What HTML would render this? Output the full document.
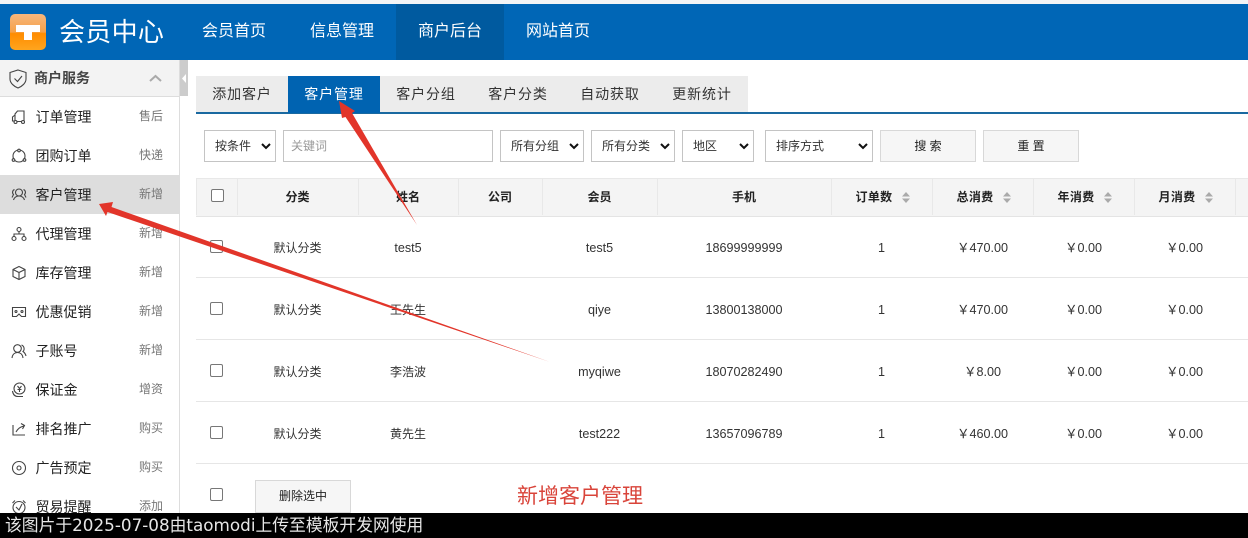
<!DOCTYPE html>
<html lang="zh-CN"><head><meta charset="utf-8"><title>会员中心</title>
<style>
html,body{margin:0;padding:0;background:#fff}
body{width:1248px;height:538px;overflow:hidden;position:relative;font-family:"Liberation Sans","Noto Sans CJK SC",sans-serif;color:#222}
.a{position:absolute;white-space:nowrap}
.nav{position:absolute;top:4px;height:56px;line-height:56px;width:108px;text-align:center;color:#fff;font-size:16px}
.m{position:absolute;left:35.500px;font-size:14px;line-height:20px;color:#222}
.t{position:absolute;left:139px;font-size:12px;line-height:16px;color:#777}
.ic{position:absolute;left:11px;width:16px;height:16px;fill:none;stroke:#444;stroke-width:1.1}
.tab{position:absolute;top:76px;height:36px;line-height:36px;text-align:center;font-size:14px;letter-spacing:.9px;color:#333;width:92px}
.box{position:absolute;top:130px;height:30px;border:1px solid #c4c4c4;background:#fff;font-size:12px;line-height:30px;color:#333}
.box svg{position:absolute;top:11px;width:10px;height:8px}
.btn{position:absolute;background:#f6f6f6;border:1px solid #d8d8d8;text-align:center;font-size:12px;color:#222;box-sizing:border-box}
.th{position:absolute;top:179px;height:36px;line-height:36px;font-size:12px;font-weight:bold;color:#222;text-align:center;white-space:nowrap}
.dv{position:absolute;top:179px;height:36px;width:1px;background:#e8e8e8}
.sort{position:absolute;top:192px;width:8px;height:11px;fill:#aaa}
.cell{position:absolute;font-size:12px;line-height:16px;text-align:center;color:#333;white-space:nowrap}
.n{font-size:12.600px}
.cb{position:absolute;left:210px;width:11px;height:11px;border:1px solid #777;border-radius:2px;background:#fff}
.ln{position:absolute;left:196px;width:1052px;height:1px;background:#e6e6e6}
</style></head><body>

<div class="a" style="left:0;top:0;width:1248px;height:4px;background:#f2f4f6"></div>
<div class="a" style="left:0;top:4px;width:1248px;height:56px;background:#0066b6"></div>
<div class="a" style="left:396px;top:4px;width:108px;height:56px;background:#005a9f"></div>
<div class="a" style="left:10px;top:14px;width:36px;height:36px;border-radius:5px;background:linear-gradient(#f7b67c 0%,#f5a24a 50%,#ff8c00 54%,#ffa51e 100%)"></div>
<div class="a" style="left:16px;top:25px;width:24px;height:7px;background:#fff"></div>
<div class="a" style="left:24px;top:25px;width:8px;height:15px;background:#fff"></div>
<div class="a" style="left:59px;top:13px;font-size:26px;letter-spacing:.3px;line-height:38px;color:#fff">会员中心</div>
<div class="nav" style="left:180px">会员首页</div>
<div class="nav" style="left:288px">信息管理</div>
<div class="nav" style="left:396px">商户后台</div>
<div class="nav" style="left:504px">网站首页</div>

<!-- sidebar -->
<div class="a" style="left:179px;top:60px;width:1px;height:453px;background:#ddd"></div>
<div class="a" style="left:0;top:60px;width:179px;height:36px;background:#f3f3f3;border-bottom:1px solid #ddd"></div>
<div class="a" style="left:180px;top:60px;width:8px;height:36px;background:#ccc"></div>
<svg class="a" style="left:182px;top:74px" width="5" height="9"><path d="M4 0V9L0 4.500Z" fill="#fff"/></svg>
<svg class="a" style="left:9px;top:69px" width="18" height="20" fill="none" stroke="#444" stroke-width="1.1"><path d="M9 1 L17 3.500 V10 C17 14 13 17.500 9 19 C5 17.500 1 14 1 10 V3.500 Z"/><path d="M5.500 9.500 L8.500 12.500 L13 7"/></svg>
<div class="a" style="left:34px;top:68px;font-size:14px;line-height:20px;font-weight:bold;color:#444">商户服务</div>
<svg class="a" style="left:149px;top:74px" width="13" height="8" fill="none" stroke="#aaa" stroke-width="2"><path d="M1 7 L6.500 2 L12 7"/></svg>

<div class="a" style="left:0;top:175px;width:179px;height:39px;background:#ddd"></div>

<svg class="ic" style="top:109px" viewBox="0 0 16 16"><path d="M4 12V5L6.500 2H13V12M4 12H1.500V8L4 6M6 12.500H11"/><circle cx="4.500" cy="13" r="1.500"/><circle cx="12" cy="13" r="1.500"/></svg>
<div class="m" style="top:107px">订单管理</div><div class="t" style="top:108px">售后</div>

<svg class="ic" style="top:148px" viewBox="0 0 16 16"><circle cx="8" cy="8" r="6"/><circle cx="8" cy="2.500" r="1.300" fill="#fff"/><circle cx="2.500" cy="12" r="1.300" fill="#fff"/><circle cx="13.500" cy="12" r="1.300" fill="#fff"/></svg>
<div class="m" style="top:146px">团购订单</div><div class="t" style="top:147px">快递</div>

<svg class="ic" style="top:187px" viewBox="0 0 16 16"><circle cx="8" cy="5.500" r="3.500"/><path d="M2.500 13C3 10.500 5.500 9 8 9S13 10.500 13.500 13M3.500 2.500A3 3 0 0 0 2.500 7.500L1 10.500M12.500 2.500A3 3 0 0 1 13.500 7.500L15 10.500"/></svg>
<div class="m" style="top:185px">客户管理</div><div class="t" style="top:186px">新增</div>

<svg class="ic" style="top:226px" viewBox="0 0 16 16"><circle cx="8" cy="3.500" r="2"/><circle cx="3" cy="12.500" r="2"/><circle cx="13" cy="12.500" r="2"/><path d="M8 5.500V8M3 10.500V8H13V10.500"/></svg>
<div class="m" style="top:224px">代理管理</div><div class="t" style="top:225px">新增</div>

<svg class="ic" style="top:265px" viewBox="0 0 16 16"><path d="M8 1.500L14 4.500V11.500L8 14.500L2 11.500V4.500ZM2 4.500L8 7.500L14 4.500M8 7.500V14.500"/></svg>
<div class="m" style="top:263px">库存管理</div><div class="t" style="top:264px">新增</div>

<svg class="ic" style="top:304px" viewBox="0 0 16 16"><path d="M1.500 3.500H14.500V12.500H10.500L8 10L5.500 12.500H1.500Z"/><circle cx="5" cy="7.500" r="1"/><circle cx="11" cy="7.500" r="1"/></svg>
<div class="m" style="top:302px">优惠促销</div><div class="t" style="top:303px">新增</div>

<svg class="ic" style="top:343px" viewBox="0 0 16 16"><circle cx="6.500" cy="5.500" r="3.800"/><path d="M1 15C1.500 11 4 9.500 6.500 9.500S11.500 11 12 15M10.500 2A4 4 0 0 1 12 8.500C13.500 9.500 14.500 11 15 13"/></svg>
<div class="m" style="top:341px">子账号</div><div class="t" style="top:342px">新增</div>

<svg class="ic" style="top:382px" viewBox="0 0 16 16"><circle cx="8.500" cy="6.500" r="5.500"/><path d="M6.500 4L8.500 6.500L10.500 4M8.500 6.500V10M6.500 7.500H10.500M1.500 9C2 12.500 4 14.500 7 14.500H12"/></svg>
<div class="m" style="top:380px">保证金</div><div class="t" style="top:381px">增资</div>

<svg class="ic" style="top:421px" viewBox="0 0 16 16"><path d="M2 4V14H14M5 11C7 7.500 9 6 13 5M10 2.500L13.500 4.500L11.500 8"/></svg>
<div class="m" style="top:419px">排名推广</div><div class="t" style="top:420px">购买</div>

<svg class="ic" style="top:460px" viewBox="0 0 16 16"><circle cx="8" cy="8" r="6.500"/><circle cx="8" cy="8" r="2"/></svg>
<div class="m" style="top:458px">广告预定</div><div class="t" style="top:459px">购买</div>

<svg class="ic" style="top:499px" viewBox="0 0 16 16"><circle cx="8" cy="8.500" r="6"/><path d="M5 8L8 11L11 5M1.500 4L4 1.500M14.500 4L12 1.500"/></svg>
<div class="m" style="top:497px">贸易提醒</div><div class="t" style="top:498px">添加</div>

<!-- tabs -->
<div class="a" style="left:196px;top:76px;width:552px;height:36px;background:#ececec"></div>
<div class="a" style="left:196px;top:112px;width:1052px;height:2px;background:#1a69a0"></div>
<div class="a" style="left:288px;top:76px;width:92px;height:37px;background:#0063b1"></div>
<div class="tab" style="left:196px">添加客户</div>
<div class="tab" style="left:288px;color:#fff">客户管理</div>
<div class="tab" style="left:380px">客户分组</div>
<div class="tab" style="left:472px">客户分类</div>
<div class="tab" style="left:564px">自动获取</div>
<div class="tab" style="left:656px">更新统计</div>

<!-- filters -->
<div class="box" style="left:204px;width:70px"><span class="a" style="left:10px">按条件</span><svg style="left:56px" viewBox="0 0 10 8"><path d="M1 2L5 6L9 2" fill="none" stroke="#111" stroke-width="2"/></svg></div>
<div class="box" style="left:283px;width:208px;color:#999"><span class="a" style="left:7px">关键词</span></div>
<div class="box" style="left:500px;width:82px"><span class="a" style="left:10px">所有分组</span><svg style="left:68px" viewBox="0 0 10 8"><path d="M1 2L5 6L9 2" fill="none" stroke="#111" stroke-width="2"/></svg></div>
<div class="box" style="left:591px;width:82px"><span class="a" style="left:10px">所有分类</span><svg style="left:68px" viewBox="0 0 10 8"><path d="M1 2L5 6L9 2" fill="none" stroke="#111" stroke-width="2"/></svg></div>
<div class="box" style="left:682px;width:70px"><span class="a" style="left:10px">地区</span><svg style="left:56px" viewBox="0 0 10 8"><path d="M1 2L5 6L9 2" fill="none" stroke="#111" stroke-width="2"/></svg></div>
<div class="box" style="left:765px;width:106px"><span class="a" style="left:10px">排序方式</span><svg style="left:92px" viewBox="0 0 10 8"><path d="M1 2L5 6L9 2" fill="none" stroke="#111" stroke-width="2"/></svg></div>
<div class="btn" style="left:880px;top:130px;width:96px;height:32px;line-height:30px">搜 索</div>
<div class="btn" style="left:983px;top:130px;width:96px;height:32px;line-height:30px">重 置</div>

<!-- table header -->
<div class="a" style="left:196px;top:178px;width:1052px;height:37px;background:#f4f4f4;border-top:1px solid #e8e8e8;border-bottom:1px solid #e4e4e4"></div>
<div class="dv" style="left:237px"></div><div class="dv" style="left:358px"></div><div class="dv" style="left:458px"></div><div class="dv" style="left:542px"></div><div class="dv" style="left:657px"></div><div class="dv" style="left:831px"></div><div class="dv" style="left:932px"></div><div class="dv" style="left:1033px"></div><div class="dv" style="left:1134px"></div><div class="dv" style="left:1235px"></div>
<div class="a" style="left:196px;top:178px;width:1px;height:37px;background:#e8e8e8"></div>
<div class="cb" style="top:189px;left:211px"></div>
<div class="th" style="left:237px;width:121px">分类</div>
<div class="th" style="left:358px;width:100px">姓名</div>
<div class="th" style="left:458px;width:84px">公司</div>
<div class="th" style="left:542px;width:115px">会员</div>
<div class="th" style="left:657px;width:174px">手机</div>
<div class="th" style="left:855px;width:38px;letter-spacing:.3px">订单数</div><svg class="sort" style="left:902px" viewBox="0 0 8 11"><path d="M4 0L8 4.500H0ZM4 11L8 6.500H0Z"/></svg>
<div class="th" style="left:956px;width:38px;letter-spacing:.3px">总消费</div><svg class="sort" style="left:1003px" viewBox="0 0 8 11"><path d="M4 0L8 4.500H0ZM4 11L8 6.500H0Z"/></svg>
<div class="th" style="left:1057px;width:38px;letter-spacing:.3px">年消费</div><svg class="sort" style="left:1104px" viewBox="0 0 8 11"><path d="M4 0L8 4.500H0ZM4 11L8 6.500H0Z"/></svg>
<div class="th" style="left:1158px;width:38px;letter-spacing:.3px">月消费</div><svg class="sort" style="left:1205px" viewBox="0 0 8 11"><path d="M4 0L8 4.500H0ZM4 11L8 6.500H0Z"/></svg>

<!-- rows -->
<div class="cb" style="top:240px"></div>
<div class="cell" style="left:237px;width:121px;top:240px">默认分类</div><div class="cell n" style="left:358px;width:100px;top:240px">test5</div><div class="cell n" style="left:542px;width:115px;top:240px">test5</div><div class="cell n" style="left:657px;width:174px;top:240px">18699999999</div><div class="cell n" style="left:831px;width:101px;top:240px">1</div><div class="cell n" style="left:932px;width:101px;top:240px">￥470.00</div><div class="cell n" style="left:1033px;width:101px;top:240px">￥0.00</div><div class="cell n" style="left:1134px;width:101px;top:240px">￥0.00</div>
<div class="ln" style="top:277px"></div>

<div class="cb" style="top:302px"></div>
<div class="cell" style="left:237px;width:121px;top:302px">默认分类</div><div class="cell" style="left:358px;width:100px;top:302px">王先生</div><div class="cell n" style="left:542px;width:115px;top:302px">qiye</div><div class="cell n" style="left:657px;width:174px;top:302px">13800138000</div><div class="cell n" style="left:831px;width:101px;top:302px">1</div><div class="cell n" style="left:932px;width:101px;top:302px">￥470.00</div><div class="cell n" style="left:1033px;width:101px;top:302px">￥0.00</div><div class="cell n" style="left:1134px;width:101px;top:302px">￥0.00</div>
<div class="ln" style="top:339px"></div>

<div class="cb" style="top:364px"></div>
<div class="cell" style="left:237px;width:121px;top:364px">默认分类</div><div class="cell" style="left:358px;width:100px;top:364px">李浩波</div><div class="cell n" style="left:542px;width:115px;top:364px">myqiwe</div><div class="cell n" style="left:657px;width:174px;top:364px">18070282490</div><div class="cell n" style="left:831px;width:101px;top:364px">1</div><div class="cell n" style="left:932px;width:101px;top:364px">￥8.00</div><div class="cell n" style="left:1033px;width:101px;top:364px">￥0.00</div><div class="cell n" style="left:1134px;width:101px;top:364px">￥0.00</div>
<div class="ln" style="top:401px"></div>

<div class="cb" style="top:426px"></div>
<div class="cell" style="left:237px;width:121px;top:426px">默认分类</div><div class="cell" style="left:358px;width:100px;top:426px">黄先生</div><div class="cell n" style="left:542px;width:115px;top:426px">test222</div><div class="cell n" style="left:657px;width:174px;top:426px">13657096789</div><div class="cell n" style="left:831px;width:101px;top:426px">1</div><div class="cell n" style="left:932px;width:101px;top:426px">￥460.00</div><div class="cell n" style="left:1033px;width:101px;top:426px">￥0.00</div><div class="cell n" style="left:1134px;width:101px;top:426px">￥0.00</div>
<div class="ln" style="top:463px"></div>

<div class="cb" style="top:488px"></div>
<div class="btn" style="left:255px;top:480px;width:96px;height:33px;line-height:31px">删除选中</div>
<div class="a" style="left:517px;top:482px;font-size:21px;line-height:30px;color:#d9443a">新增客户管理</div>

<!-- arrows -->
<svg class="a" style="left:0;top:0" width="1248" height="538">
<polygon points="339,101 355,111 352,113 417,225 345.500,117 342,118" fill="#e2352a"/>
<polygon points="99,204 113,202 111.500,207 550,362 107.500,212 106,216" fill="#e2352a"/>
</svg>

<!-- bottom bar -->
<div class="a" style="left:0;top:513px;width:1248px;height:25px;background:#000"></div>
<div class="a" style="left:5px;top:513px;font-family:'DejaVu Sans','Noto Sans CJK SC',sans-serif;font-size:16.800px;line-height:24px;color:#e6e6e6">该图片于2025-07-08由taomodi上传至模板开发网使用</div>

</body></html>
